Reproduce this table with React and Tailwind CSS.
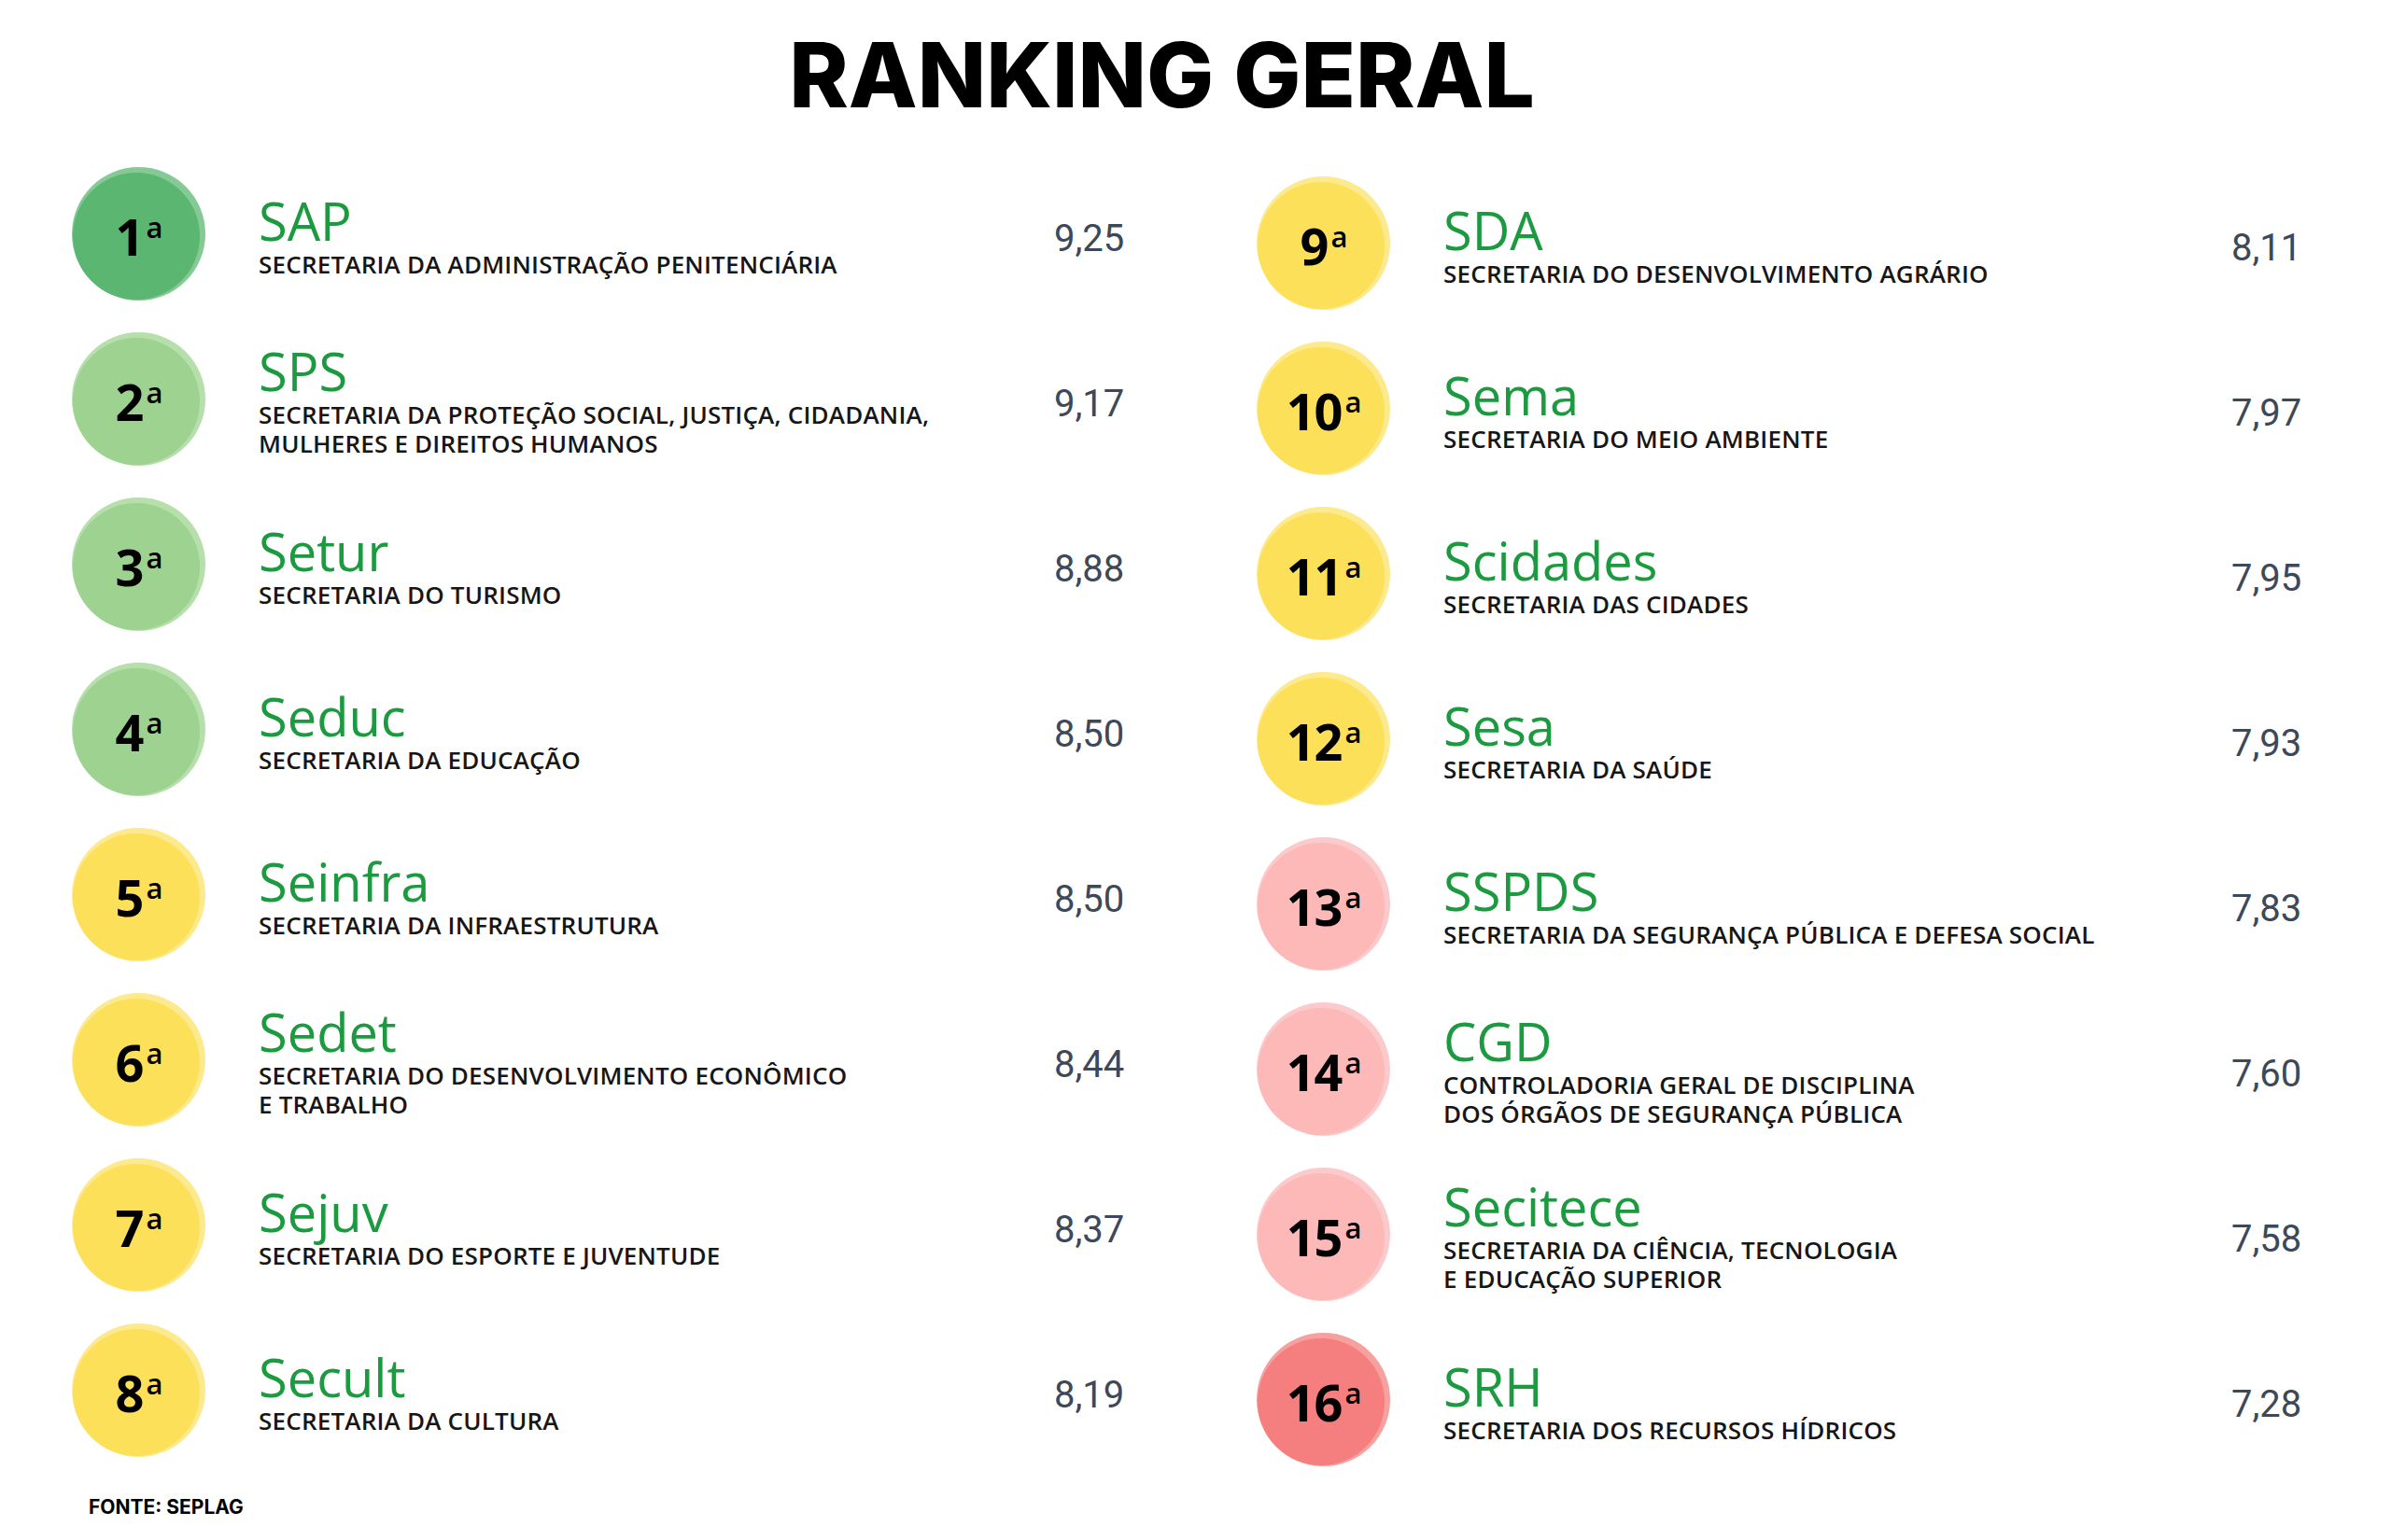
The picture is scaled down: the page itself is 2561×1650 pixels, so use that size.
import React from 'react';

// circle colours per tier: outer ring + inner disk
const tones = {
  top: { ring: 'bg-[#85c994]', disk: 'bg-[#5bb671]' },
  green: { ring: 'bg-[#b6dfab]', disk: 'bg-[#9dd290]' },
  yellow: { ring: 'bg-[#fde98e]', disk: 'bg-[#fde05a]' },
  pink: { ring: 'bg-[#fccaca]', disk: 'bg-[#fdb8b8]' },
  red: { ring: 'bg-[#f6a0a0]', disk: 'bg-[#f57e7e]' },
};

const leftRows = [
  { pos: 1, tone: 'top', name: 'SAP', desc: ['SECRETARIA DA ADMINISTRAÇÃO PENITENCIÁRIA'], score: '9,25' },
  { pos: 2, tone: 'green', name: 'SPS', desc: ['SECRETARIA DA PROTEÇÃO SOCIAL, JUSTIÇA, CIDADANIA,', 'MULHERES E DIREITOS HUMANOS'], score: '9,17' },
  { pos: 3, tone: 'green', name: 'Setur', desc: ['SECRETARIA DO TURISMO'], score: '8,88' },
  { pos: 4, tone: 'green', name: 'Seduc', desc: ['SECRETARIA DA EDUCAÇÃO'], score: '8,50' },
  { pos: 5, tone: 'yellow', name: 'Seinfra', desc: ['SECRETARIA DA INFRAESTRUTURA'], score: '8,50' },
  { pos: 6, tone: 'yellow', name: 'Sedet', desc: ['SECRETARIA DO DESENVOLVIMENTO ECONÔMICO', 'E TRABALHO'], score: '8,44' },
  { pos: 7, tone: 'yellow', name: 'Sejuv', desc: ['SECRETARIA DO ESPORTE E JUVENTUDE'], score: '8,37' },
  { pos: 8, tone: 'yellow', name: 'Secult', desc: ['SECRETARIA DA CULTURA'], score: '8,19' },
];

const rightRows = [
  { pos: 9, tone: 'yellow', name: 'SDA', desc: ['SECRETARIA DO DESENVOLVIMENTO AGRÁRIO'], score: '8,11' },
  { pos: 10, tone: 'yellow', name: 'Sema', desc: ['SECRETARIA DO MEIO AMBIENTE'], score: '7,97' },
  { pos: 11, tone: 'yellow', name: 'Scidades', desc: ['SECRETARIA DAS CIDADES'], score: '7,95' },
  { pos: 12, tone: 'yellow', name: 'Sesa', desc: ['SECRETARIA DA SAÚDE'], score: '7,93' },
  { pos: 13, tone: 'pink', name: 'SSPDS', desc: ['SECRETARIA DA SEGURANÇA PÚBLICA E DEFESA SOCIAL'], score: '7,83' },
  { pos: 14, tone: 'pink', name: 'CGD', desc: ['CONTROLADORIA GERAL DE DISCIPLINA', 'DOS ÓRGÃOS DE SEGURANÇA PÚBLICA'], score: '7,60' },
  { pos: 15, tone: 'pink', name: 'Secitece', desc: ['SECRETARIA DA CIÊNCIA, TECNOLOGIA', 'E EDUCAÇÃO SUPERIOR'], score: '7,58' },
  { pos: 16, tone: 'red', name: 'SRH', desc: ['SECRETARIA DOS RECURSOS HÍDRICOS'], score: '7,28' },
];

function Badge({ pos, tone }) {
  const t = tones[tone];
  return (
    <div className={`w-[143px] h-[143px] shrink-0 rounded-full ${t.ring} pt-[6px] pr-[6px] pb-[1px] pl-[1px] flex`}>
      <div className={`flex-1 rounded-full ${t.disk} flex items-center justify-center`}>
        <div className="flex items-start font-['Open_Sans',sans-serif] text-black pl-[6px]">
          <span className="text-[54px] font-bold leading-none tracking-[-1px]">{pos}</span>
          <span className="text-[31px] font-semibold leading-none ml-[3px] mt-[2px]">a</span>
        </div>
      </div>
    </div>
  );
}

function Row({ row, textWidth }) {
  return (
    <div className="h-[177px] flex items-center">
      <Badge pos={row.pos} tone={row.tone} />
      <div className={`ml-[57px] ${textWidth} font-['Open_Sans',sans-serif] pt-[4px]`}>
        <div className="text-[56px] leading-[58px] text-[#1b9a3f] mb-[3px]">{row.name}</div>
        {row.desc.map((line) => (
          <div key={line} className="text-[26px] leading-[31px] font-semibold text-[#161616] tracking-[0.2px]">
            {line}
          </div>
        ))}
      </div>
      <div className="font-['Roboto',sans-serif] text-[40px] leading-none text-[#3d4858] mt-[10px]">{row.score}</div>
    </div>
  );
}

export default function App() {
  return (
    <div className="w-[2561px] h-[1650px] bg-white overflow-hidden">
      <div className="h-[162px] pt-[32px] pr-[72px] flex justify-center">
        <h1 className="font-['Inter',sans-serif] font-extrabold text-[96px] leading-none text-black">
          RANKING GERAL
        </h1>
      </div>

      <div className="flex pl-[77px]">
        {/* Left column */}
        <div className="w-[1269px]">
          {leftRows.map((r) => (
            <Row key={r.pos} row={r} textWidth="w-[852px]" />
          ))}
          <div className="mt-[26px] ml-[18px] font-['Inter',sans-serif] font-bold text-[21px] leading-none text-black">
            FONTE: SEPLAG
          </div>
        </div>

        {/* Right column */}
        <div className="mt-[10px]">
          {rightRows.map((r) => (
            <Row key={r.pos} row={r} textWidth="w-[844px]" />
          ))}
        </div>
      </div>
    </div>
  );
}
